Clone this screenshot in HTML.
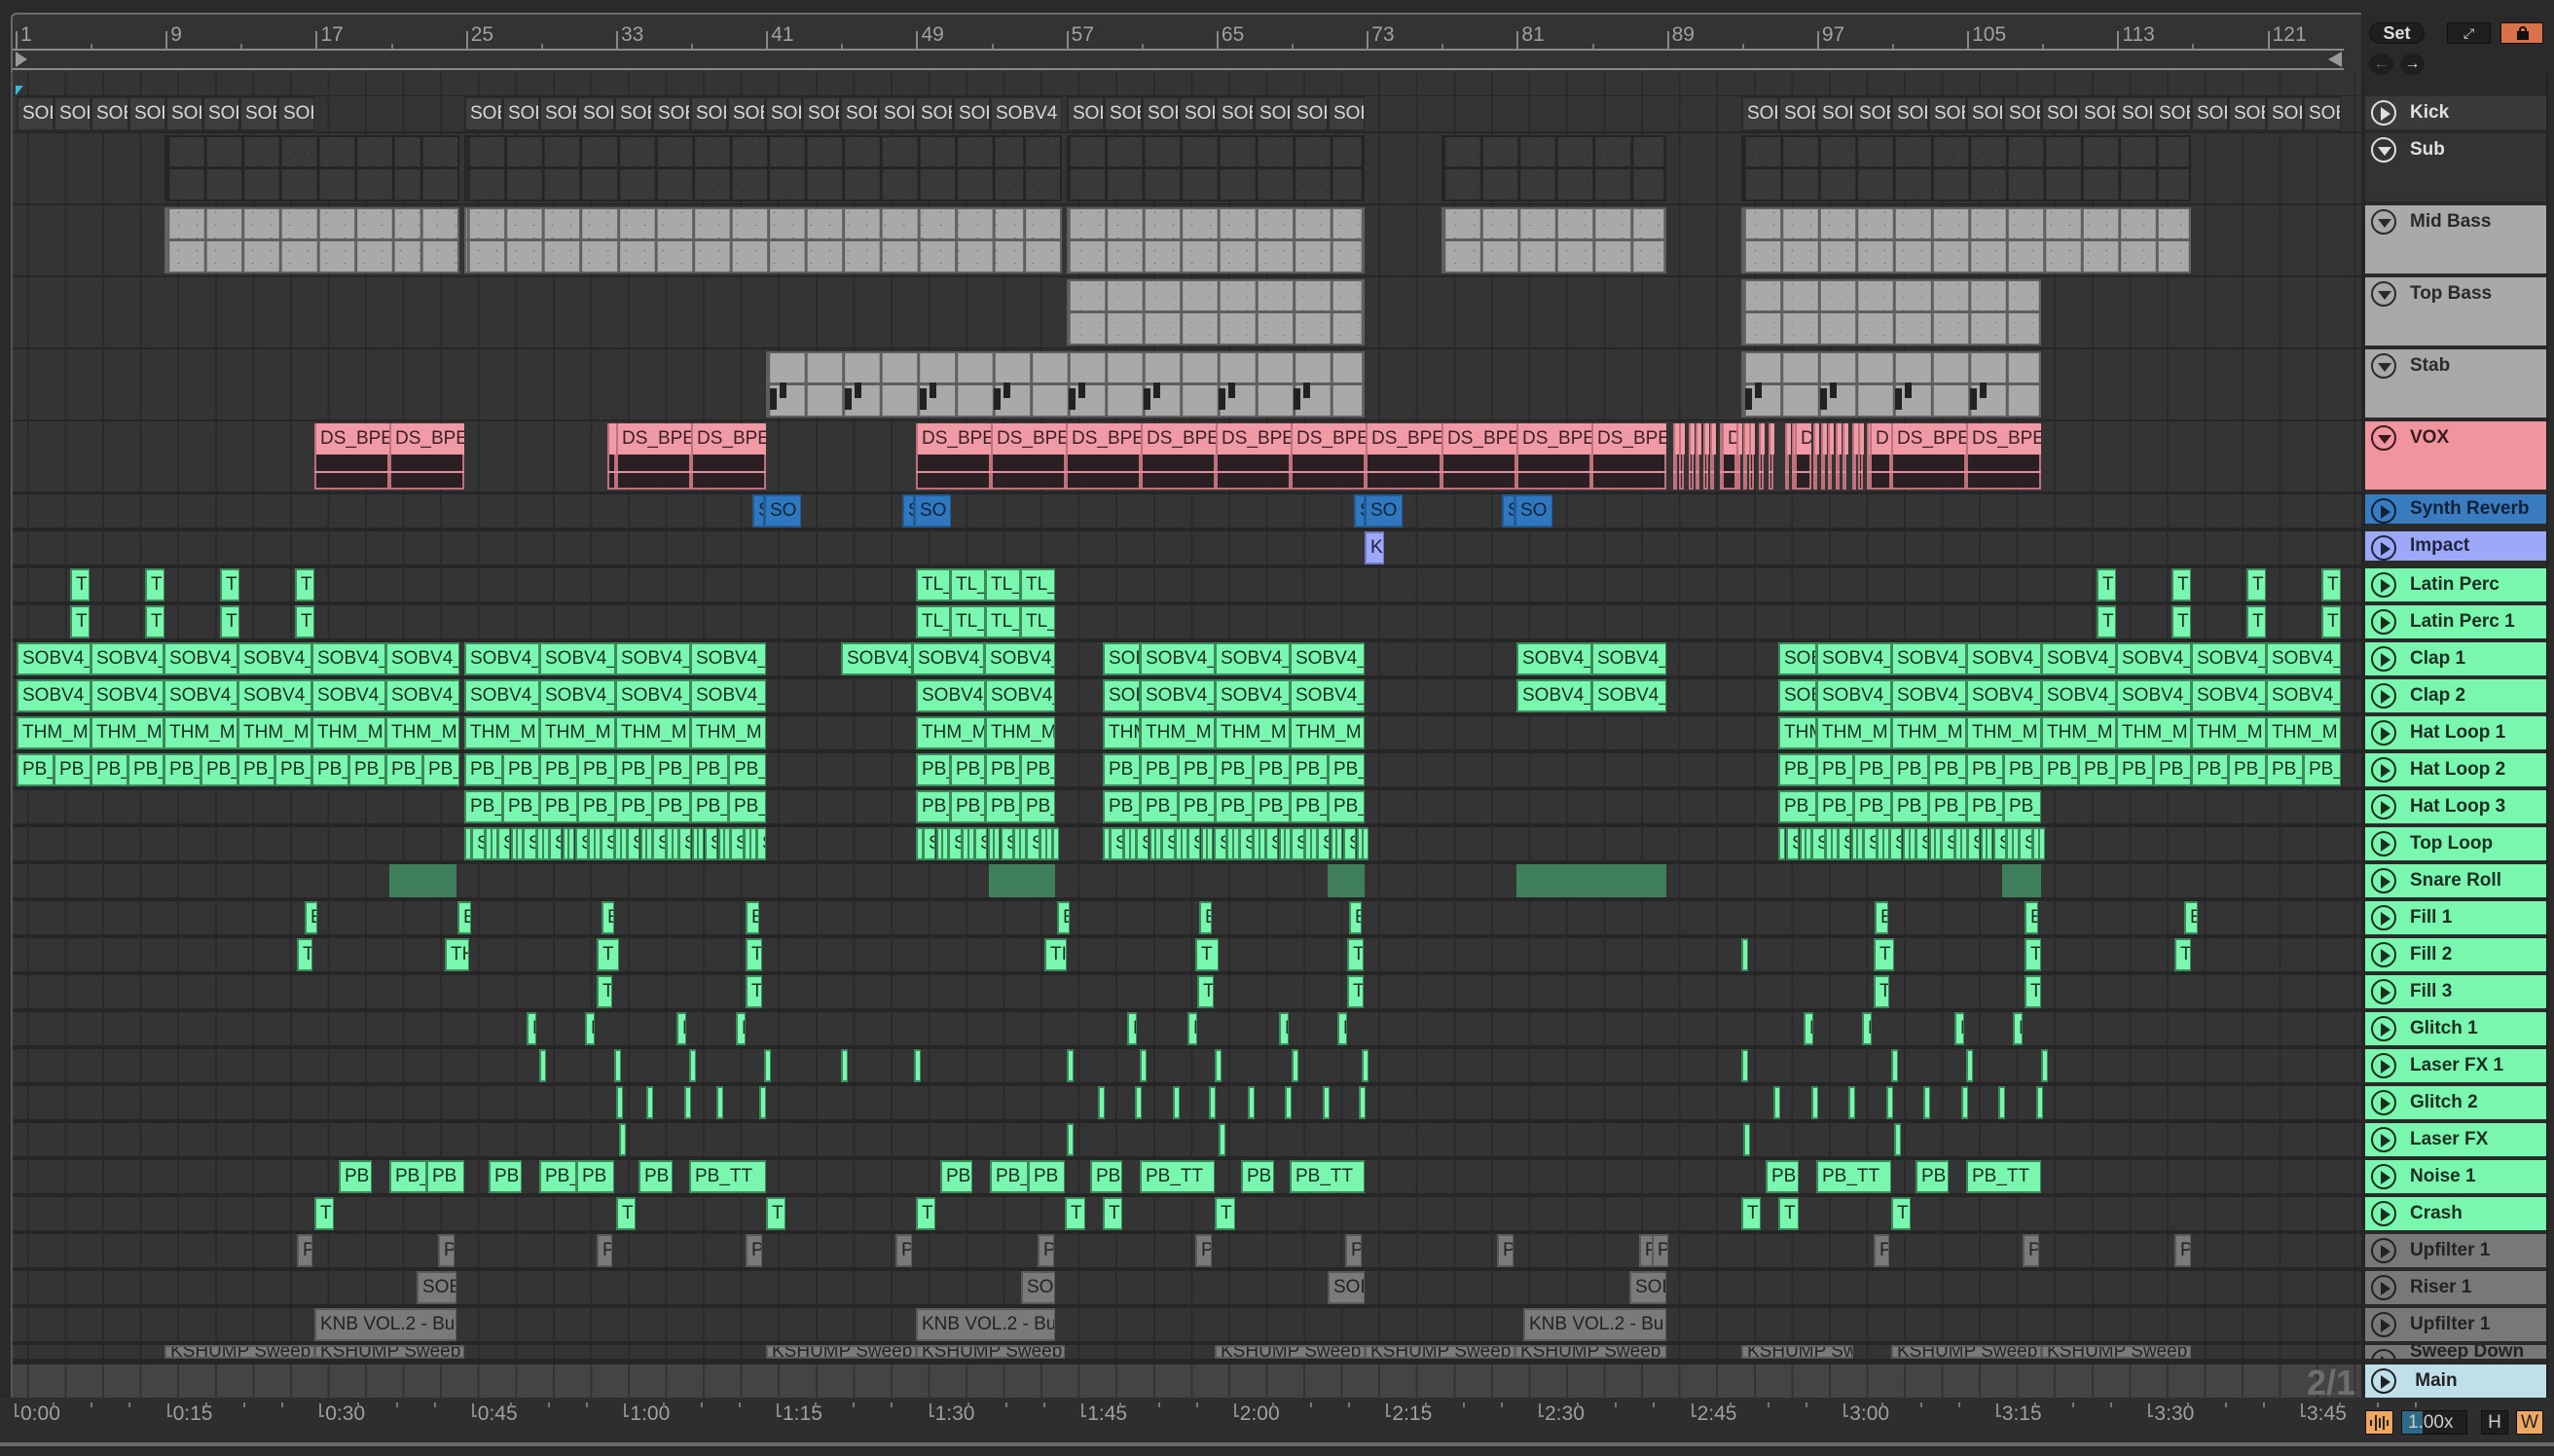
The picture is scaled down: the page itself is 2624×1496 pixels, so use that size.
<!DOCTYPE html>
<html><head><meta charset="utf-8">
<style>
*{margin:0;padding:0;box-sizing:border-box}
html,body{width:2624px;height:1496px;overflow:hidden;background:#2a2a2a;font-family:"Liberation Sans",sans-serif}
#root{position:relative;width:2624px;height:1496px}
.a{position:absolute}
.c{position:absolute;overflow:hidden;white-space:nowrap;font-size:19px;line-height:34px;padding-left:4px}
.h{position:absolute;left:2430px;width:186px;font-weight:bold;font-size:19px;color:#1b2a22;overflow:hidden;white-space:nowrap}
.h .ic{position:absolute;left:6px;width:26px;height:26px;border:2px solid currentColor;border-radius:50%}
.h .t{position:absolute;left:46px}
.tri{position:absolute;left:8px;top:5px;width:0;height:0;border-left:10px solid currentColor;border-top:7px solid transparent;border-bottom:7px solid transparent}
.trd{position:absolute;left:5px;top:8px;width:0;height:0;border-top:9px solid currentColor;border-left:7px solid transparent;border-right:7px solid transparent}
.rl{position:absolute;color:#a0a0a0;font-size:21px}
</style></head><body><div id="root"></div>
<script>
const S=1.6735,R=document.getElementById('root');
function X(x){return Math.round(x*S)}
function el(cls,st,html){const d=document.createElement('div');d.className=cls;Object.assign(d.style,st);if(html)d.innerHTML=html;R.appendChild(d);return d}
el('a',{left:'0',top:'0',width:'2624px',height:'13px',background:'#2a2a2a'});
el('a',{left:'11px',top:'13px',width:'2415px',height:'62px',background:'#333',borderTop:'2px solid #6a6a6a',borderLeft:'2px solid #6a6a6a',borderTopLeftRadius:'6px'});
el('a',{left:'13px',top:'50px',width:'2395px',height:'22px',borderTop:'2px solid #8a8a8a',borderBottom:'2px solid #8a8a8a'});
el('a',{left:'16px',top:'53px',width:'0',height:'0',borderLeft:'12px solid #999',borderTop:'8px solid transparent',borderBottom:'8px solid transparent'});
el('a',{left:'2392px',top:'53px',width:'0',height:'0',borderRight:'14px solid #999',borderTop:'8px solid transparent',borderBottom:'8px solid transparent'});
const bw=19.28;
for(let b=1;b<=121;b+=8){const x=16+(b-1)*bw;el('a',{left:x+'px',top:'32px',width:'1px',height:'18px',borderLeft:'2px solid #888'});el('rl',{left:(x+5)+'px',top:'24px'},String(b));}
for(let b=5;b<=121;b+=8){const x=16+(b-1)*bw;el('a',{left:x+'px',top:'45px',width:'2px',height:'5px',background:'#777'});}
const rows=[];
function addRow(top,h){rows.push([top,h]);}
addRow(75,23);addRow(99,36);
for(let i=0;i<5;i++)addRow(137+74*i,72);
rows.push([433,72]); // dup VOX index 7
for(let i=0;i<24;i++)addRow(508+38*i,34);
const gridBg='repeating-linear-gradient(90deg,#2a2a2a 0 2px,#343434 2px 38.56px)';
el('a',{left:'13px',top:'75px',width:'2413px',height:'1321px',background:'#262626'});
rows.forEach(([t,h],i)=>{if(i==7)return;let hh=h;if(t+hh>1396)hh=1396-t;el('a',{left:'13px',top:t+'px',width:'2413px',height:hh+'px',background:gridBg,backgroundPosition:'15px 0'});});
el('a',{left:'13px',top:'1396px',width:'2413px',height:'6px',background:'#262626'});
el('a',{left:'13px',top:'1402px',width:'2413px',height:'34px',background:'repeating-linear-gradient(90deg,#333 0 2px,#444 2px 38.56px)',backgroundPosition:'15px 0'});
el('a',{left:'2370px',top:'1400px',color:'#6e6e6e',fontSize:'36px',fontWeight:'bold'},'2/1');
el('a',{left:'16px',top:'88px',width:'0',height:'0',borderTop:'10px solid #3cb8d8',borderRight:'8px solid transparent'});
el('a',{left:'11px',top:'75px',width:'2px',height:'1361px',background:'#555'});
const rowTop=i=>rows[i][0], rowH=i=>rows[i][1];
const G={bg:'#7af7ae',b:'#3c8a5c',c:'#1a2e22'};
function clip(ri,x1,x2,label,col){const t=rowTop(ri);let h=rowH(ri);if(t+h>1396)h=1396-t;
 const l=X(x1),w=Math.max(3,X(x2)-l);
 el('c',{left:l+'px',top:t+'px',width:w+'px',height:h+'px',background:col.bg,color:col.c,border:'2px solid '+col.b,borderRight:'1px solid '+col.b,lineHeight:(h-4)+'px'},label||'');}
function run(ri,x1,x2,n,label,col,firstLabel){const w=(x2-x1)/n;for(let k=0;k<n;k++)clip(ri,x1+k*w,x1+(k+1)*w,(k==0&&firstLabel)?firstLabel:label,col);}
const K={bg:'#3d3d3d',b:'#2a2a2a',c:'#d8d8d8'};
run(1,10,193,8,'SOBV4',K);run(1,285,608,14,'SOBV4',K);clip(1,608,652,'SOBV4',K);run(1,655,838,8,'SOBV4',K);run(1,1069,1253,8,'SOBV4',K);run(1,1253,1437,8,'SOBV4',K);
function tall(ri,x1,x2,bg,line,dots,step){const t=rowTop(ri),l=X(x1),w=X(x2)-l;
 el('a',{left:l+'px',top:(t+2)+'px',width:w+'px',height:'68px',background:bg,border:'2px solid '+line,
 backgroundImage:'linear-gradient(180deg,transparent 30px,'+line+' 30px,'+line+' 33px,transparent 33px),repeating-linear-gradient(90deg,'+line+' 0 3px,transparent 3px '+step+'px),radial-gradient('+dots+' 0.8px,transparent 1.2px)',
 backgroundSize:'100% 100%,100% 100%,19px 13px',backgroundPosition:'0 0,'+(-((l-15)%step))+'px 0,3px 36px'});}
[[101,282],[285,652],[655,838],[885,1023],[1069,1345]].forEach(r=>{tall(2,r[0],r[1],'#393939','#252525','#4a4a4a',38.56);tall(3,r[0],r[1],'#a9a9a9','#5f5f5f','#777',38.56);});
[[655,838],[1069,1253]].forEach(r=>tall(4,r[0],r[1],'#a9a9a9','#5f5f5f','#888',38.56));
[[470,838],[1069,1253]].forEach(r=>{tall(5,r[0],r[1],'#a9a9a9','#5f5f5f','#a9a9a9',38.56);
 for(let x=r[0];x<r[1]-10;x+=46){const l=X(x);el('a',{left:(l+4)+'px',top:(rowTop(5)+40)+'px',width:'7px',height:'22px',background:'#222'});el('a',{left:(l+14)+'px',top:(rowTop(5)+34)+'px',width:'7px',height:'16px',background:'#222'});}});
function vox(x1,x2,label){const t=rowTop(6),l=X(x1),w=X(x2)-l;
 el('c',{left:l+'px',top:(t+2)+'px',width:w+'px',height:'68px',background:'#2a1f22',border:'2px solid #c0707a',padding:0},'');
 el('c',{left:l+'px',top:(t+2)+'px',width:w+'px',height:'32px',background:'#f09aa5',color:'#3a1f24',borderLeft:'2px solid #c0707a',lineHeight:'32px'},label);
 el('a',{left:l+'px',top:(t+51)+'px',width:w+'px',height:'2px',background:'#e0909a'});}
vox(193,239,'DS_BPE');vox(239,285,'DS_BPE');vox(373,378,'');vox(378,424,'DS_BPE');vox(424,470,'DS_BPE');
for(let x=562;x<1023;x+=46.1)vox(x,Math.min(x+46.1,1023),'DS_BPE');
[1027,1031,1037,1041,1046,1050,1056,1060,1066,1070,1074,1080,1086,1096,1100,1104,1113,1118,1122,1127,1131,1137,1141,1146].forEach(x=>vox(x,x+2.5,''));
vox(1057,1066,'D');vox(1102,1112,'D');vox(1148,1161,'D');vox(1161,1207,'DS_BPE');vox(1207,1253,'DS_BPE');
const B={bg:'#2f78c0',b:'#225a94',c:'#10243a'};
clip(8,462,469,'S',B);clip(8,469,492,'SO',B);clip(8,554,561,'S',B);clip(8,561,584,'SO',B);clip(8,831,838,'S',B);clip(8,838,861,'SO',B);clip(8,922,930,'S',B);clip(8,930,953,'SO',B);
clip(9,838,850,'K',{bg:'#9ea8f8',b:'#6f78c8',c:'#202040'});
[10,11].forEach(r=>{[43,89,135,181,1287,1333,1379,1425].forEach(x=>clip(r,x,x+12,'T',G));run(r,562,648,4,'TL_',G);});
[12,13].forEach(r=>{run(r,10,282,6,'SOBV4_',G);run(r,285,470,4,'SOBV4_',G);
 if(r==12)run(r,516,648,3,'SOBV4_',G);else run(r,562,648,2,'SOBV4_',G);
 clip(r,677,700,'SOBV4',G);run(r,700,838,3,'SOBV4_',G);run(r,931,1023,2,'SOBV4_',G);clip(r,1092,1115,'SOBV4',G);run(r,1115,1437,7,'SOBV4_',G);});
run(14,10,282,6,'THM_M',G);run(14,285,470,4,'THM_M',G);run(14,562,648,2,'THM_M',G);clip(14,677,700,'THM',G);run(14,700,838,3,'THM_M',G);clip(14,1092,1115,'THM',G);run(14,1115,1437,7,'THM_M',G);
run(15,10,282,12,'PB_',G);run(15,285,470,8,'PB_',G);run(15,562,648,4,'PB_',G);run(15,677,838,7,'PB_',G);run(15,1092,1437,15,'PB_',G);
run(16,285,470,8,'PB_',G);run(16,562,648,4,'PB_',G);run(16,677,838,7,'PB_',G);run(16,1092,1253,7,'PB_',G);
[[285,470],[562,648],[677,838],[1092,1253]].forEach(r=>{let x=r[0],k=0;while(x<r[1]-2){const w=(k%3==1)?8:(k%3==0?4:3);clip(17,x,Math.min(x+w,r[1]),w>5?'S':'',G);x+=w+0.3;k++;}});
const D={bg:'#3f7f5b',b:'#3f7f5b',c:'#000'};
[[239,280],[607,648],[815,838],[931,1023],[1229,1253]].forEach(r=>clip(18,r[0],r[1],'',D));
[187,281,369,458,649,736,828,1151,1243,1341].forEach(x=>clip(19,x,x+8,'E',G));
[[182,192,'T'],[273,288,'TH'],[366,380,'T'],[458,468,'T'],[641,655,'TI'],[734,748,'T'],[827,837,'T'],[1069,1071,''],[1150,1163,'T'],[1243,1253,'T'],[1335,1345,'T']].forEach(a=>clip(20,a[0],a[1],a[2],G));
[366,458,735,827,1150,1243].forEach(x=>clip(21,x,x+10,'T',G));
[323,359,415,452,692,729,785,821,1107,1143,1200,1236].forEach(x=>clip(22,x,x+6,'F',G));
[331,377,423,469,516,561,655,700,746,793,836,1069,1161,1207,1253].forEach(x=>clip(23,x,x+2,'',G));
[378,397,420,440,466,674,697,720,742,766,789,812,834,1089,1112,1135,1158,1181,1204,1227,1250].forEach(x=>clip(24,x,x+3,'',G));
[380,655,748,1070,1163].forEach(x=>clip(25,x,x+3,'',G));
[[208,228,'PB'],[239,262,'PB_'],[262,285,'PB'],[300,320,'PB'],[331,354,'PB_'],[354,377,'PB'],[392,413,'PB'],[423,470,'PB_TT'],[577,597,'PB'],[608,631,'PB_'],[631,654,'PB'],[669,689,'PB'],[700,746,'PB_TT'],[762,782,'PB'],[792,838,'PB_TT'],[1084,1104,'PB'],[1115,1161,'PB_TT'],[1176,1196,'PB'],[1207,1253,'PB_TT']].forEach(a=>clip(26,a[0],a[1],a[2],G));
[193,378,470,562,654,677,746,1069,1092,1161].forEach(x=>clip(27,x,x+12,'T',G));
const GR={bg:'#7a7a7a',b:'#5a5a5a',c:'#222'};
[182,269,366,458,550,637,734,826,919,1006,1014,1150,1242,1335].forEach(x=>clip(28,x,x+10,'P',GR));
[[256,280],[627,648],[815,838],[1000,1023]].forEach(r=>clip(29,r[0],r[1],'SOE',GR));
[[193,280],[562,648],[935,1023]].forEach(r=>clip(30,r[0],r[1],'KNB VOL.2 - Bu',GR));
[[101,193],[193,285],[470,562],[562,654],[746,838],[838,930],[930,1023],[1069,1138],[1161,1253],[1253,1345]].forEach(r=>clip(31,r[0],r[1],'KSHUMP Sweep D',GR));
function hdr(top,h,name,bg,fg,down){const d=el('h',{top:top+'px',height:h+'px',background:bg,color:fg,lineHeight:Math.min(h,34)+'px'});
 d.innerHTML='<div class="ic" style="top:4px"><div class="'+(down?'trd':'tri')+'"></div></div><div class="t">'+name+'</div>';}
hdr(99,34,'Kick','#3a3a3a','#e0e0e0',0);hdr(137,70,'Sub','#333','#e0e0e0',1);
hdr(211,70,'Mid Bass','#a9a9a9','#2a2a2a',1);hdr(285,70,'Top Bass','#a9a9a9','#2a2a2a',1);hdr(359,70,'Stab','#a9a9a9','#2a2a2a',1);hdr(433,70,'VOX','#f0959f','#3a1a1f',1);
hdr(508,30,'Synth Reverb','#3a7cc0','#0f2238',0);hdr(546,30,'Impact','#9ea8f8','#1f2540',0);
const gn=['Latin Perc','Latin Perc 1','Clap 1','Clap 2','Hat Loop 1','Hat Loop 2','Hat Loop 3','Top Loop','Snare Roll','Fill 1','Fill 2','Fill 3','Glitch 1','Laser FX 1','Glitch 2','Laser FX','Noise 1','Crash'];
gn.forEach((n,i)=>hdr(584+38*i,34,n,'#7af7ae','#1b2e22',0));
['Upfilter 1','Riser 1','Upfilter 1'].forEach((n,i)=>hdr(1268+38*i,34,n,'#787878','#222',0));
hdr(1382,14,'Sweep Down','#787878','#222',0);
hdr(1402,34,'&nbsp;Main','#bfe0ea','#222',0);
el('a',{left:'2426px',top:'75px',width:'4px',height:'1361px',background:'#262626'});
el('a',{left:'2616px',top:'75px',width:'8px',height:'1361px',background:'#2a2a2a',borderLeft:'2px solid #222'});
el('a',{left:'2434px',top:'23px',width:'57px',height:'22px',borderRadius:'11px',background:'#1e1e1e',border:'1px solid #111',color:'#ddd',fontSize:'18px',fontWeight:'bold',textAlign:'center',lineHeight:'20px'},'Set');
el('a',{left:'2514px',top:'23px',width:'45px',height:'22px',background:'#1e1e1e',border:'1px solid #111',color:'#ddd',fontSize:'14px',textAlign:'center',lineHeight:'20px'},'&#10530;');
el('a',{left:'2569px',top:'23px',width:'44px',height:'22px',background:'#d9714a',border:'1px solid #111'},'<div style="position:absolute;left:16px;top:8px;width:12px;height:9px;background:#111"></div><div style="position:absolute;left:18px;top:3px;width:8px;height:8px;border:2px solid #111;border-bottom:none;border-radius:4px 4px 0 0"></div>');
el('a',{left:'2434px',top:'55px',width:'25px',height:'22px',borderRadius:'50%',background:'#1e1e1e',color:'#666',fontSize:'16px',textAlign:'center',lineHeight:'22px',fontWeight:'bold'},'&#8592;');
el('a',{left:'2466px',top:'55px',width:'25px',height:'22px',borderRadius:'50%',background:'#1e1e1e',color:'#ddd',fontSize:'16px',textAlign:'center',lineHeight:'22px',fontWeight:'bold'},'&#8594;');
el('a',{left:'0',top:'1436px',width:'2624px',height:'46px',background:'#2e2e2e'});
el('a',{left:'0',top:'1482px',width:'2624px',height:'4px',background:'#6a6a6a'});
el('a',{left:'0',top:'1486px',width:'2624px',height:'10px',background:'#2a2a2a'});
const tl=['0:00','0:15','0:30','0:45','1:00','1:15','1:30','1:45','2:00','2:15','2:30','2:45','3:00','3:15','3:30','3:45'];
tl.forEach((t,i)=>{const x=15+i*156.6;el('a',{left:x+'px',top:'1442px',width:'5px',height:'14px',borderLeft:'2px solid #888',borderBottom:'2px solid #888'});el('rl',{left:(x+6)+'px',top:'1441px',fontSize:'21px'},t);
 for(let k=1;k<4;k++)el('a',{left:(x+k*39.15)+'px',top:'1441px',width:'2px',height:'5px',background:'#777'});});
el('a',{left:'2430px',top:'1449px',width:'29px',height:'25px',background:'#f0a860',border:'1px solid #111'},'<svg width="27" height="23"><g stroke="#222" stroke-width="2"><line x1="5" y1="9" x2="5" y2="15"/><line x1="10" y1="4" x2="10" y2="20"/><line x1="14" y1="7" x2="14" y2="17"/><line x1="18" y1="5" x2="18" y2="19"/><line x1="22" y1="9" x2="22" y2="15"/></g></svg>');
el('a',{left:'2467px',top:'1449px',width:'68px',height:'25px',background:'#1e1e1e',border:'1px solid #111'},'<div style="position:absolute;left:0;top:0;width:21px;height:23px;background:#2d6a88"></div><div style="position:absolute;left:6px;top:0;color:#ccc;font-size:19px;line-height:23px">1.00x</div>');
el('a',{left:'2549px',top:'1449px',width:'28px',height:'25px',background:'#1e1e1e',border:'1px solid #111',color:'#ccc',fontSize:'19px',textAlign:'center',lineHeight:'23px'},'H');
el('a',{left:'2585px',top:'1449px',width:'28px',height:'25px',background:'#f0a860',border:'1px solid #111',color:'#222',fontSize:'19px',textAlign:'center',lineHeight:'23px'},'W');
</script></body></html>
